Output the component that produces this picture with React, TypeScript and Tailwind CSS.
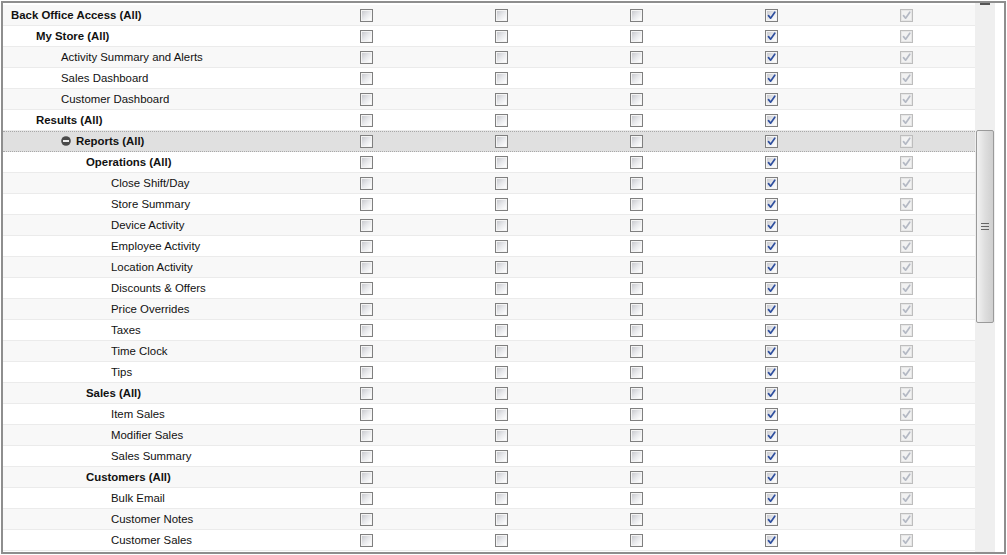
import React from "react"

type Row = { label: string; level: number; bold?: boolean; expander?: boolean }

const rows: Row[] = [
  { label: "Back Office Access (All)", level: 0, bold: true },
  { label: "My Store (All)", level: 1, bold: true },
  { label: "Activity Summary and Alerts", level: 2 },
  { label: "Sales Dashboard", level: 2 },
  { label: "Customer Dashboard", level: 2 },
  { label: "Results (All)", level: 1, bold: true },
  { label: "Reports (All)", level: 2, bold: true, expander: true },
  { label: "Operations (All)", level: 3, bold: true },
  { label: "Close Shift/Day", level: 4 },
  { label: "Store Summary", level: 4 },
  { label: "Device Activity", level: 4 },
  { label: "Employee Activity", level: 4 },
  { label: "Location Activity", level: 4 },
  { label: "Discounts & Offers", level: 4 },
  { label: "Price Overrides", level: 4 },
  { label: "Taxes", level: 4 },
  { label: "Time Clock", level: 4 },
  { label: "Tips", level: 4 },
  { label: "Sales (All)", level: 3, bold: true },
  { label: "Item Sales", level: 4 },
  { label: "Modifier Sales", level: 4 },
  { label: "Sales Summary", level: 4 },
  { label: "Customers (All)", level: 3, bold: true },
  { label: "Bulk Email", level: 4 },
  { label: "Customer Notes", level: 4 },
  { label: "Customer Sales", level: 4 },
]

const indent = ["pl-[8px]", "pl-[33px]", "pl-[58px]", "pl-[83px]", "pl-[108px]"]

function Checkbox({ state }: { state: "off" | "on" | "disabled" }) {
  const disabled = state === "disabled"
  return (
    <div
      className={
        "relative w-[13px] h-[13px] border " +
        (disabled ? "border-[#bdbdbd]" : "border-[#7f7f7f]")
      }
    >
      <div
        className={
          "absolute inset-0 border " +
          (disabled
            ? "border-[#e6e6e6] bg-[#f2f2f2]"
            : "border-[#f4f4f4] bg-gradient-to-br from-[#c9cacf] via-[#e8e9ec] to-[#ffffff]")
        }
      />
      {state !== "off" && (
        <svg className="absolute left-[1px] top-[1px]" width="9" height="9" viewBox="0 0 9 9">
          <path
            d="M1.5 4.6 L3.6 7.2 L7.8 1.2"
            fill="none"
            stroke={disabled ? "#b4b9c4" : "#2f4f9e"}
            strokeWidth="1.7"
            strokeLinecap="round"
            strokeLinejoin="round"
          />
        </svg>
      )}
    </div>
  )
}

function Expander() {
  return (
    <svg width="10" height="10" viewBox="0 0 10 10" className="mr-[5px] shrink-0">
      <circle cx="5" cy="5" r="4.8" fill="#4a4a4a" />
      <rect x="2" y="4.1" width="6" height="1.8" fill="#ffffff" />
    </svg>
  )
}

export default function App() {
  return (
    <div
      className="w-[1007px] h-[555px] bg-white overflow-hidden"
      style={{ fontFamily: '"Liberation Sans", Arial, sans-serif' }}
    >
      <div className="ml-[1px] mt-[1px] w-[1005px] h-[553px] border-2 border-[#8e8e8e] flex">
        <div className="w-[972px] pt-[2px]">
          {rows.map((r, i) => (
            <div
              key={r.label}
              className={
                "flex h-[21px] items-center " +
                (r.expander
                  ? "bg-[#e0e0e0] border-y border-dotted border-[#a8a8a8]"
                  : "border-b border-[#ebebeb] " + (i % 2 === 0 ? "bg-[#f8f8f8]" : "bg-white"))
              }
            >
              <div
                className={
                  "w-[296px] flex items-center text-[11.4px] text-[#111] " +
                  indent[r.level] +
                  (r.bold ? " font-bold" : "") +
                  (r.expander ? "" : " pt-[2px]")
                }
              >
                {r.expander && <Expander />}
                <span>{r.label}</span>
              </div>
              {[0, 1, 2, 3, 4].map((c) => (
                <div key={c} className="w-[135px] flex justify-center">
                  <Checkbox state={c < 3 ? "off" : c === 3 ? "on" : "disabled"} />
                </div>
              ))}
            </div>
          ))}
        </div>
        <div className="relative w-[20px] h-full bg-[#efefef]">
          <div className="absolute left-[5px] top-0 w-[10px] h-[2px] bg-[#555]" />
          <div className="absolute left-[1px] top-[127px] w-[18px] h-[193px] rounded-[2px] border border-[#9a9a9a] bg-gradient-to-r from-[#f2f2f2] via-[#dedede] to-[#cfcfcf] flex flex-col items-center justify-center gap-[2px]">
            <div className="w-[8px] h-[1px] bg-[#666]" />
            <div className="w-[8px] h-[1px] bg-[#666]" />
            <div className="w-[8px] h-[1px] bg-[#666]" />
          </div>
        </div>
      </div>
    </div>
  )
}
